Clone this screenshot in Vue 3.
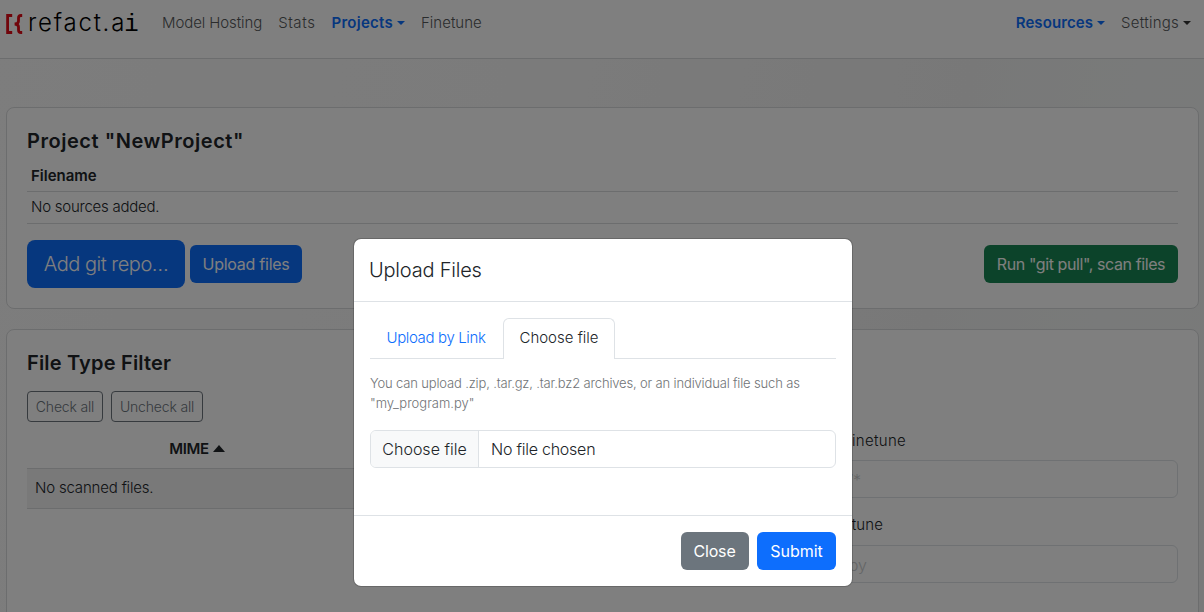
<script setup>
const leftLinks = [
  { label: 'Model Hosting', cls: 'hosting' },
  { label: 'Stats', cls: 'stats' },
  { label: 'Projects', cls: 'projects', active: true, menu: true },
  { label: 'Finetune', cls: 'finetune' },
]
const rightLinks = [
  { label: 'Resources', cls: 'resources', active: true, menu: true },
  { label: 'Settings', cls: 'settings', menu: true },
]
</script>

<template>
  <div class="page">
    <header class="navbar">
      <div class="brand">
        <svg class="mark" width="18" height="20" viewBox="0 0 18 20" fill="none" stroke="#e30b17" stroke-width="2.8">
          <path d="M6.200 1.500H1.600V18.500H6.200" />
          <path d="M16.200 1.500h-1.200c-1.800 0-2.500.9-2.500 2.600v2.800c0 1.800-1.200 2.900-3.800 3.100 2.600.2 3.800 1.300 3.800 3.100v2.800c0 1.700.7 2.600 2.500 2.600h1.200" />
        </svg>
        <span class="word">refact.a<span class="mono">i</span></span>
      </div>
      <nav class="links">
        <a v-for="l in leftLinks" :key="l.label" :class="[l.cls, { active: l.active }]">
          <span>{{ l.label }}</span><i v-if="l.menu" class="caret"></i>
        </a>
      </nav>
      <nav class="links end">
        <a v-for="l in rightLinks" :key="l.label" :class="[l.cls, { active: l.active }]">
          <span>{{ l.label }}</span><i v-if="l.menu" class="caret"></i>
        </a>
      </nav>
    </header>

    <main class="content">
      <section class="card project">
        <h3 class="t-project">Project "NewProject"</h3>
        <div class="row head"><span>Filename</span></div>
        <div class="row none-row"><span>No sources added.</span></div>
        <div class="actions">
          <button class="btn primary large"><span>Add git repo…</span></button>
          <button class="btn primary upload"><span>Upload files</span></button>
          <button class="btn success"><span>Run "git pull", scan files</span></button>
        </div>
      </section>

      <section class="card filter">
        <div class="types">
          <h3 class="t-filter">File Type Filter</h3>
          <div class="checks">
            <button class="outline check"><span>Check all</span></button>
            <button class="outline uncheck"><span>Uncheck all</span></button>
          </div>
          <div class="mime"><span>MIME</span><i class="sort"></i></div>
          <div class="empty"><span>No scanned files.</span></div>
        </div>
        <div class="globs">
          <label class="one">Include in finetune</label>
          <div class="field f1"><span>*/*</span></div>
          <label class="two">Exclude finetune</label>
          <div class="field f2"><span>*.py</span></div>
        </div>
      </section>
    </main>

    <div class="backdrop">
      <div class="modal">
        <div class="m-head"><h5>Upload Files</h5></div>
        <div class="m-body">
          <div class="tabs">
            <a class="tab link"><span>Upload by Link</span></a>
            <a class="tab current"><span>Choose file</span></a>
          </div>
          <p class="hint">
            <span class="archives">You can upload .zip, .tar.gz, .tar.bz2 archives, or an individual file such as</span><br>
            <span>"my_program.py"</span>
          </p>
          <div class="file">
            <span class="pick"><span>Choose file</span></span>
            <span class="none">No file chosen</span>
          </div>
        </div>
        <div class="m-foot">
          <button class="btn secondary"><span>Close</span></button>
          <button class="btn primary submit"><span>Submit</span></button>
        </div>
      </div>
    </div>
  </div>
</template>

<style>
html, body { margin: 0; overflow: hidden; }
</style>

<style scoped>
* { box-sizing: border-box; }
.page {
  position: relative;
  width: 1204px;
  height: 612px;
  overflow: hidden;
  background: linear-gradient(100deg, #fafafa 0%, #f7f7f7 40%, #f1f1f1 75%, #f2f5f4 88%, #f3f3f3 100%);
  font-family: Inter, "Liberation Sans", sans-serif;
  font-weight: 300;
  font-size: 15px;
  color: #212529;
  white-space: nowrap;
}
h3, h5, p { margin: 0; }
button { font: inherit; border: 0; padding: 0; }

.navbar {
  height: 59px;
  padding: 0 13px 0 6px;
  display: flex;
  background: #fff;
  border-bottom: 1px solid #d8dadc;
}
.brand { display: flex; width: 156px; }
.mark { margin-top: 14px; margin-right: 4px; flex: none; }
.word { font: 300 24px/46px Inter, sans-serif; color: #000; letter-spacing: 1.8px; }
.mono { font-family: "Liberation Mono", monospace; font-size: 24px; margin-left: -2px; line-height: 1; }
.links { display: flex; gap: 16px; height: 45px; align-items: center; color: #55585a; }
.links.end { margin-left: auto; }
.links a { display: flex; align-items: center; }
.links .active { color: #0d6efd; font-weight: 600; }
.hosting { letter-spacing: -0.1px; }
.stats { letter-spacing: 0.6px; }
.projects { letter-spacing: 0.27px; }
.resources { letter-spacing: 0.1px; }
.settings { letter-spacing: 0.25px; }
.caret { margin-left: 4px; border: 4px solid transparent; border-top-color: currentColor; border-bottom: 0; }
.settings .caret { border-top-color: #333; }

.content { padding: 48px 5px 0 6px; }
.card { background: #fff; border: 1px solid #d9dbdd; border-radius: 8px; padding: 20px; }
.card h3 { font-size: 20px; font-weight: 570; line-height: 24px; }
.project { height: 202px; }
.row { height: 32px; line-height: 31px; padding-left: 4px; border-bottom: 1px solid #d9dbdd; }
.none-row { line-height: 29px; letter-spacing: -0.24px; }
.project h3 { margin-top: 1px; margin-bottom: 7px; }
.card .t-project { letter-spacing: 0.54px; }
.card .t-filter { letter-spacing: 0.18px; }
.head { font-weight: 600; }
.actions { display: flex; align-items: center; margin-top: 16px; }
.btn { height: 38px; border-radius: 6px; color: #fff; font-size: 16px; font-weight: 400; text-align: center; }
.primary { background: #0d6efd; }
.success { background: #198754; width: 194px; margin-left: auto; letter-spacing: -0.4px; }
.secondary { background: #6c757d; width: 68px; letter-spacing: -0.15px; padding-right: 1px; }
.large { width: 158px; height: 48px; border-radius: 8px; font-size: 20px; font-weight: 300; margin-right: 5px; letter-spacing: -0.48px; }
.upload { width: 112px; letter-spacing: -0.25px; }

.filter { margin-top: 20px; height: 340px; display: flex; }
.types { width: 340px; }
.globs { width: 560px; margin-left: auto; padding-top: 79px; }
.types h3 { margin-top: 1px; margin-bottom: 16px; }
.checks { display: flex; gap: 8px; }
.outline { height: 31px; border: 1px solid #6c757d; border-radius: 4px; background: transparent; color: #6c757d; font-size: 14px; letter-spacing: -0.17px; }
.check { width: 76px; }
.uncheck { width: 92px; }
.mime { height: 46px; padding-top: 7px; display: flex; align-items: center; justify-content: center; font-weight: 600; letter-spacing: -0.35px; }
.sort { margin-left: 4px; border: 6px solid transparent; border-bottom: 7px solid #212529; border-top: 0; }
.empty { height: 41px; line-height: 38px; padding-left: 8px; border: solid #d9dbdd; border-width: 1px 0; background: #f2f2f2; letter-spacing: -0.18px; }
.globs label { display: block; text-align: right; line-height: 24px; letter-spacing: 0.1px; }
.globs .one { width: 288px; letter-spacing: 0.3px; }
.two { width: 265px; margin-top: 15px; }
.field { margin-top: 7px; height: 38px; border: 1px solid #dee2e6; border-radius: 6px; line-height: 38px; font-size: 16px; color: #c9cbcd; text-align: right; }
.f1 { padding-right: 316px; }
.f2 { padding-right: 310px; margin-top: 8px; }

.backdrop {
  position: absolute;
  inset: 0;
  background: rgba(0, 0, 0, 0.5);
  display: flex;
  align-items: flex-start;
  justify-content: center;
  padding: 238px 0 0 2px;
}
.modal { width: 500px; height: 349px; background: #fff; background-clip: padding-box; border: 1px solid rgba(0, 0, 0, 0.175); border-radius: 8px; }
.m-head { height: 63px; padding: 0 15px; border-bottom: 1px solid #dee2e6; }
h5 { font-size: 20px; font-weight: 350; line-height: 62px; letter-spacing: -0.2px; }
.m-body { height: 213px; padding: 16px 16px 0; }
.tabs { display: flex; height: 41px; border-bottom: 1px solid #dee2e6; }
.tab { height: 41px; line-height: 39px; text-align: center; }
.link { width: 133px; padding-right: 1px; color: #0d6efd; letter-spacing: -0.36px; }
.current { width: 112px; line-height: 37px; background: #fff; border: 1px solid #dee2e6; border-bottom: 0; border-radius: 6px 6px 0 0; }
.hint { margin-top: 14px; font-size: 13px; line-height: 20px; color: #707376; }
.archives { letter-spacing: -0.155px; }
.file { margin-top: 17px; height: 38px; border: 1px solid #dee2e6; border-radius: 6px; display: flex; line-height: 36px; font-size: 16px; overflow: hidden; }
.pick { width: 108px; text-align: center; background: #f8f9fa; border-right: 1px solid #dee2e6; }
.none { padding-left: 12px; letter-spacing: -0.24px; }
.m-foot { display: flex; justify-content: flex-end; gap: 8px; padding: 16px 16px 0; border-top: 1px solid #dee2e6; }
.submit { width: 79px; }
</style>
